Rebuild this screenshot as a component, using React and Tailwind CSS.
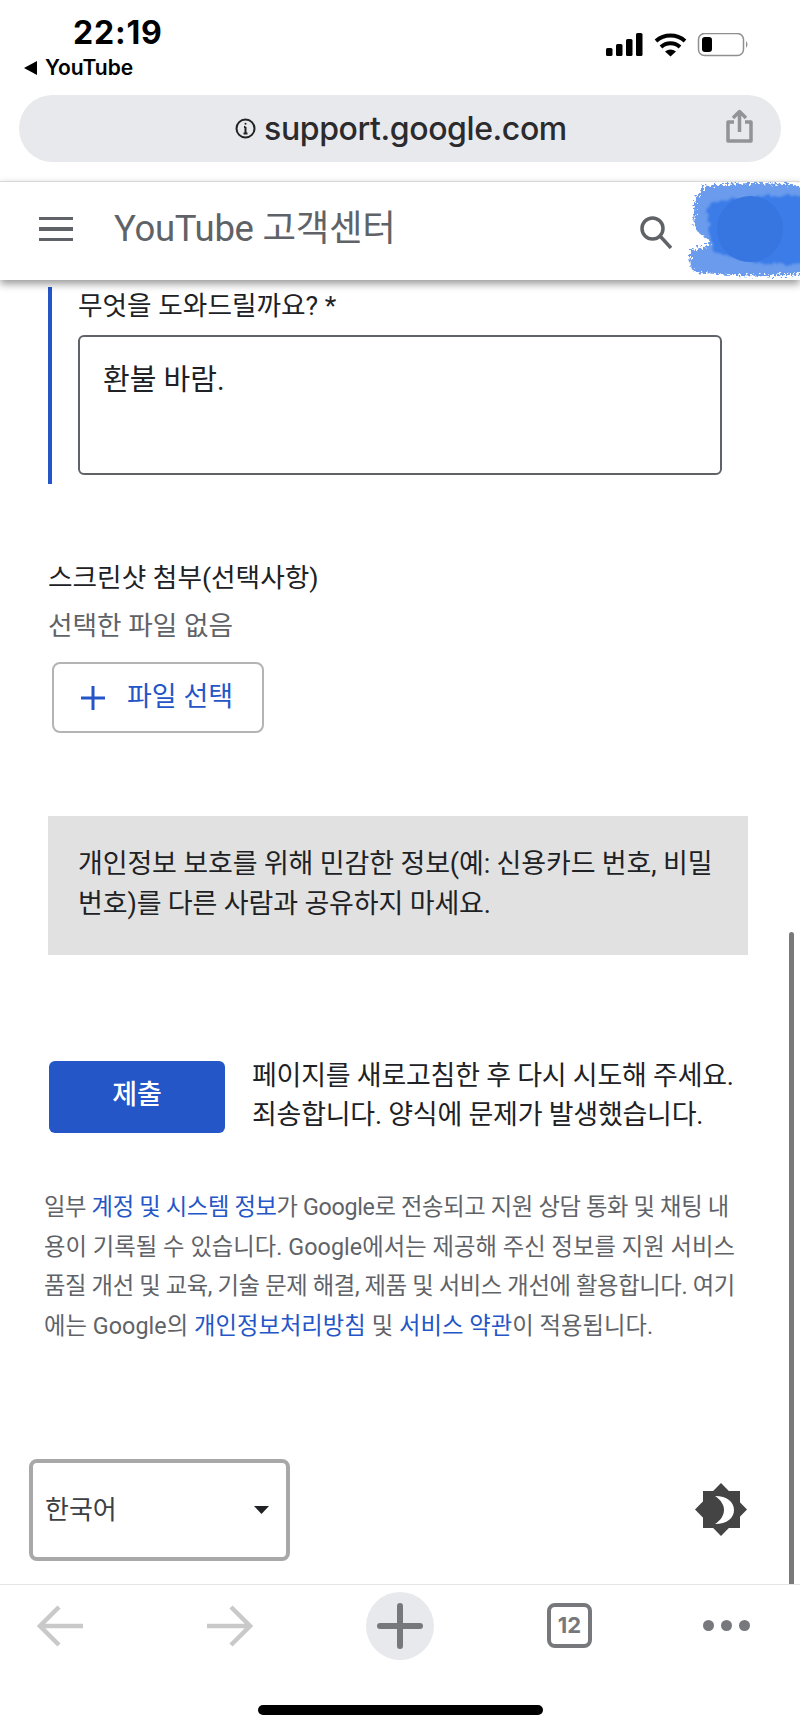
import React from "react";

const KR = { fontFamily: '"Roboto", "Noto Sans CJK KR", sans-serif' };

function StatusBar() {
  return (
    <div className="h-[95px] shrink-0 flex">
      <div className="w-[540px] shrink-0 pl-[24px]">
        <div className="pl-[49px] pt-[14px] h-[55px] text-[32px] leading-[38px] font-bold text-black tracking-[0.8px]" style={{ fontFamily: '"Inter", sans-serif' }}>22:19</div>
        <div className="flex items-center h-[26px] gap-[8px] text-[21px] font-semibold text-black" style={{ fontFamily: '"Inter", sans-serif' }}>
          <svg width="13" height="14" viewBox="0 0 13 14"><path d="M13 0v14L0 7z" fill="#000" /></svg>
          <span>YouTube</span>
        </div>
      </div>
      <div className="flex-1 flex items-start justify-end pr-[50px] pt-[33px]">
        <svg width="144" height="24" viewBox="0 0 144 24">
          <rect x="0" y="15" width="6.500" height="8" rx="1.500" fill="#000" />
          <rect x="10" y="11" width="6.500" height="12" rx="1.500" fill="#000" />
          <rect x="20" y="6" width="6.500" height="17" rx="1.500" fill="#000" />
          <rect x="30" y="0" width="6.500" height="23" rx="1.500" fill="#000" />
          <path d="M50 8a22 22 0 0 1 29 0" fill="none" stroke="#000" strokeWidth="4" />
          <path d="M55 14a14 14 0 0 1 19 0" fill="none" stroke="#000" strokeWidth="4" />
          <path d="M59 18.500q5.500-4 11 0l-5.500 5z" fill="#000" />
          <rect x="92.500" y="0.500" width="45" height="22" rx="6" fill="#fff" stroke="#8f8f8f" strokeWidth="1.500" />
          <rect x="96" y="4" width="10" height="15" rx="3" fill="#000" />
          <path d="M140 8q3 3.500 0 7z" fill="#8f8f8f" />
        </svg>
      </div>
    </div>
  );
}

function UrlBar() {
  return (
    <div className="h-[86px] shrink-0 px-[19px]">
      <div className="relative h-[67px] rounded-full bg-[#e8e9ed] flex items-center justify-center">
        <div className="flex items-center gap-[8px] text-[#2b2b2e] text-[32px] font-medium leading-none pl-[2px]" style={{ fontFamily: '"Inter", sans-serif' }}>
          <svg width="21" height="21" viewBox="0 0 21 21" fill="none" stroke="#222" strokeWidth="2"><circle cx="10.500" cy="10.500" r="9" /><path d="M10.500 9v6.500M8.500 15.500h4M9 9h1.500" /><circle cx="10.500" cy="5.800" r="1" fill="#222" stroke="none" /></svg>
          <span className="tracking-[-0.4px]">support.google.com</span>
        </div>
        <svg className="absolute right-[28px] top-[14px]" width="27" height="34" viewBox="0 0 27 34" fill="none" stroke="#929397" strokeWidth="3.500" strokeLinejoin="round"><path d="M8 13H2v19h23V13h-6" /><path d="M13.500 23V3M7 9l6.500-6.500L20 9" /></svg>
      </div>
    </div>
  );
}

function Header() {
  return (
    <div className="relative z-10 h-[99px] shrink-0 bg-white border-t border-[#d9d9d9] shadow-[0_4px_8px_rgba(0,0,0,0.4)] flex items-center overflow-hidden pb-[4px]" style={KR}>
      <div className="ml-[39px] w-[34px] flex flex-col gap-[7px]">
        <div className="h-[3.5px] bg-[#5f6368]" />
        <div className="h-[3.5px] bg-[#5f6368]" />
        <div className="h-[3.5px] bg-[#5f6368]" />
      </div>
      <div className="ml-[41px] text-[36.5px] leading-none text-[#5f6368] tracking-[-0.3px] flex-1">YouTube 고객센터</div>
      <svg className="mr-[128px] mt-[6px]" width="32" height="33" viewBox="0 0 32 33" fill="none" stroke="#5f6368" strokeWidth="3.500"><circle cx="12.500" cy="12.500" r="10.500" /><path d="M20 20 31 32" /></svg>
      <svg className="absolute right-0 top-0" width="116" height="98" viewBox="0 0 116 98">
        <defs>
          <filter id="rough" x="-20%" y="-20%" width="140%" height="140%">
            <feTurbulence type="fractalNoise" baseFrequency="0.4" numOctaves="3" seed="4" />
            <feDisplacementMap in="SourceGraphic" scale="12" />
          </filter>
          <filter id="soft" x="-20%" y="-20%" width="140%" height="140%">
            <feTurbulence type="fractalNoise" baseFrequency="0.15" numOctaves="2" seed="9" />
            <feDisplacementMap in="SourceGraphic" scale="7" />
            <feGaussianBlur stdDeviation="1" />
          </filter>
        </defs>
        <path filter="url(#rough)" d="M20 4 Q70 -2 120 4 V92 Q60 96 10 90 Q2 80 8 68 Q28 64 26 58 Q6 50 10 30 Q10 14 20 4z" fill="#6b9bec" />
        <path filter="url(#soft)" d="M26 22 Q70 12 120 14 V82 Q70 84 30 70 Q22 44 26 22z" fill="#3a7be8" />
        <circle cx="66" cy="47" r="33" fill="#3775e0" />
      </svg>
    </div>
  );
}

function Content() {
  return (
    <div className="flex-1 min-h-0 bg-white overflow-hidden" style={KR}>
      <section className="ml-[48px] mt-[7px] w-[674px] h-[197px] border-l-[4px] border-[#2456c8] pl-[26px]">
        <div className="h-[48px] text-[26.7px] leading-[38px] text-[#202124] whitespace-nowrap">무엇을 도와드릴까요? *</div>
        <div className="h-[140px] w-[644px] rounded-[6px] border-2 border-[#5f6368] px-[23px] pt-[21px] text-[29px] leading-[44px] text-[#202124]">환불 바람.</div>
      </section>

      <section className="ml-[48px] mt-[73px]">
        <div className="h-[47px] text-[26.7px] leading-[42px] text-[#202124] whitespace-nowrap">스크린샷 첨부(선택사항)</div>
        <div className="h-[58px] text-[26.7px] leading-[44px] text-[#5f6368] whitespace-nowrap">선택한 파일 없음</div>
        <div className="ml-[4px] w-[212px] h-[71px] rounded-[8px] border-2 border-[#b4b4b4] flex items-center pl-[27px] gap-[22px] text-[#2456c8] text-[27px]">
          <svg width="24" height="24" viewBox="0 0 24 24" stroke="#2456c8" strokeWidth="3"><path d="M12 0v24M0 12h24" /></svg>
          <span className="whitespace-nowrap">파일 선택</span>
        </div>
      </section>

      <section className="ml-[48px] mt-[83px] w-[700px] h-[139px] bg-[#e1e1e1] px-[30px] pt-[28px] text-[27px] leading-[40px] text-[#202124] tracking-[-0.15px] whitespace-nowrap">
        <div>개인정보 보호를 위해 민감한 정보(예: 신용카드 번호, 비밀</div>
        <div>번호)를 다른 사람과 공유하지 마세요.</div>
      </section>

      <section className="ml-[49px] mt-[106px] flex">
        <div className="w-[176px] h-[72px] rounded-[6px] bg-[#2456c8] text-white text-[27px] font-medium flex items-center justify-center pb-[3px]">제출</div>
        <div className="ml-[27px] -mt-[4px] text-[27px] leading-[39px] text-[#202124] tracking-[-0.25px] whitespace-nowrap">
          <div>페이지를 새로고침한 후 다시 시도해 주세요.</div>
          <div>죄송합니다. 양식에 문제가 발생했습니다.</div>
        </div>
      </section>

      <div className="ml-[44px] mt-[53px] text-[23.3px] leading-[39.6px] text-[#5f6368] tracking-[-0.35px] whitespace-nowrap">
        <div>일부 <a className="text-[#2456c8]">계정 및 시스템 정보</a>가 Google로 전송되고 지원 상담 통화 및 채팅 내</div>
        <div className="tracking-[0.05px]">용이 기록될 수 있습니다. Google에서는 제공해 주신 정보를 지원 서비스</div>
        <div>품질 개선 및 교육, 기술 문제 해결, 제품 및 서비스 개선에 활용합니다. 여기</div>
        <div className="tracking-[0.05px]">에는 Google의 <a className="text-[#2456c8]">개인정보처리방침</a> 및 <a className="text-[#2456c8]">서비스 약관</a>이 적용됩니다.</div>
      </div>

      <section className="ml-[29px] mt-[113px] mr-[53px] flex items-center justify-between">
        <div className="w-[261px] h-[102px] rounded-[8px] border-[4px] border-[#a8a8a8] flex items-center justify-between pl-[12px] pr-[17px] text-[26px] text-[#3c4043]">
          <span>한국어</span>
          <svg width="15" height="8" viewBox="0 0 15 8"><path d="M0 0h15L7.500 8z" fill="#202124" /></svg>
        </div>
        <svg width="52" height="53" viewBox="0 0 52 53" className="-mt-[2px]">
          <rect x="8" y="8" width="37" height="37" fill="#444" />
          <path d="M26 0 52 26.500 26 53 0 26.500z" fill="#444" />
          <path d="M20 13C32 13 39 19 39 27 39 35 32 41 20 41 26 37 29 32 29 27 29 22 26 17 20 13z" fill="#fff" />
        </svg>
      </section>
    </div>
  );
}

function Toolbar() {
  return (
    <div className="relative h-[146px] shrink-0 bg-white border-t border-[#e4e4e4]">
      <div className="h-[81px] flex items-center pl-[37px]">
        <svg width="46" height="42" viewBox="0 0 46 42" fill="none" stroke="#c9c9c9" strokeWidth="4.500"><path d="M46 21H3M22 2 3 21l19 19" /></svg>
        <svg className="ml-[124px]" width="46" height="42" viewBox="0 0 46 42" fill="none" stroke="#c9c9c9" strokeWidth="4.500"><path d="M0 21h43M24 2l19 19-19 19" /></svg>
        <div className="ml-[113px] w-[68px] h-[68px] rounded-full bg-[#e8e9ed] flex items-center justify-center">
          <svg width="46" height="46" viewBox="0 0 46 46" stroke="#77787c" strokeWidth="6" strokeLinecap="round"><path d="M23 3v40M3 23h40" /></svg>
        </div>
        <div className="ml-[113px] w-[45px] h-[45px] rounded-[8px] border-[4px] border-[#77787c] flex items-center justify-center text-[22px] font-bold text-[#77787c]" style={{ fontFamily: '"Inter", sans-serif' }}>12</div>
        <div className="ml-[111px] flex gap-[7px]">
          <div className="w-[11px] h-[11px] rounded-full bg-[#77787c]" />
          <div className="w-[11px] h-[11px] rounded-full bg-[#77787c]" />
          <div className="w-[11px] h-[11px] rounded-full bg-[#77787c]" />
        </div>
      </div>
      <div className="mx-auto mt-[39px] w-[285px] h-[10px] rounded-full bg-black" />
    </div>
  );
}

export default function App() {
  return (
    <div className="relative w-[800px] h-[1730px] bg-white overflow-hidden flex flex-col">
      <StatusBar />
      <UrlBar />
      <Header />
      <Content />
      <Toolbar />
      <div className="absolute left-[789px] top-[932px] w-[5px] h-[652px] rounded-t-full bg-[#7a7a7a]" />
    </div>
  );
}
